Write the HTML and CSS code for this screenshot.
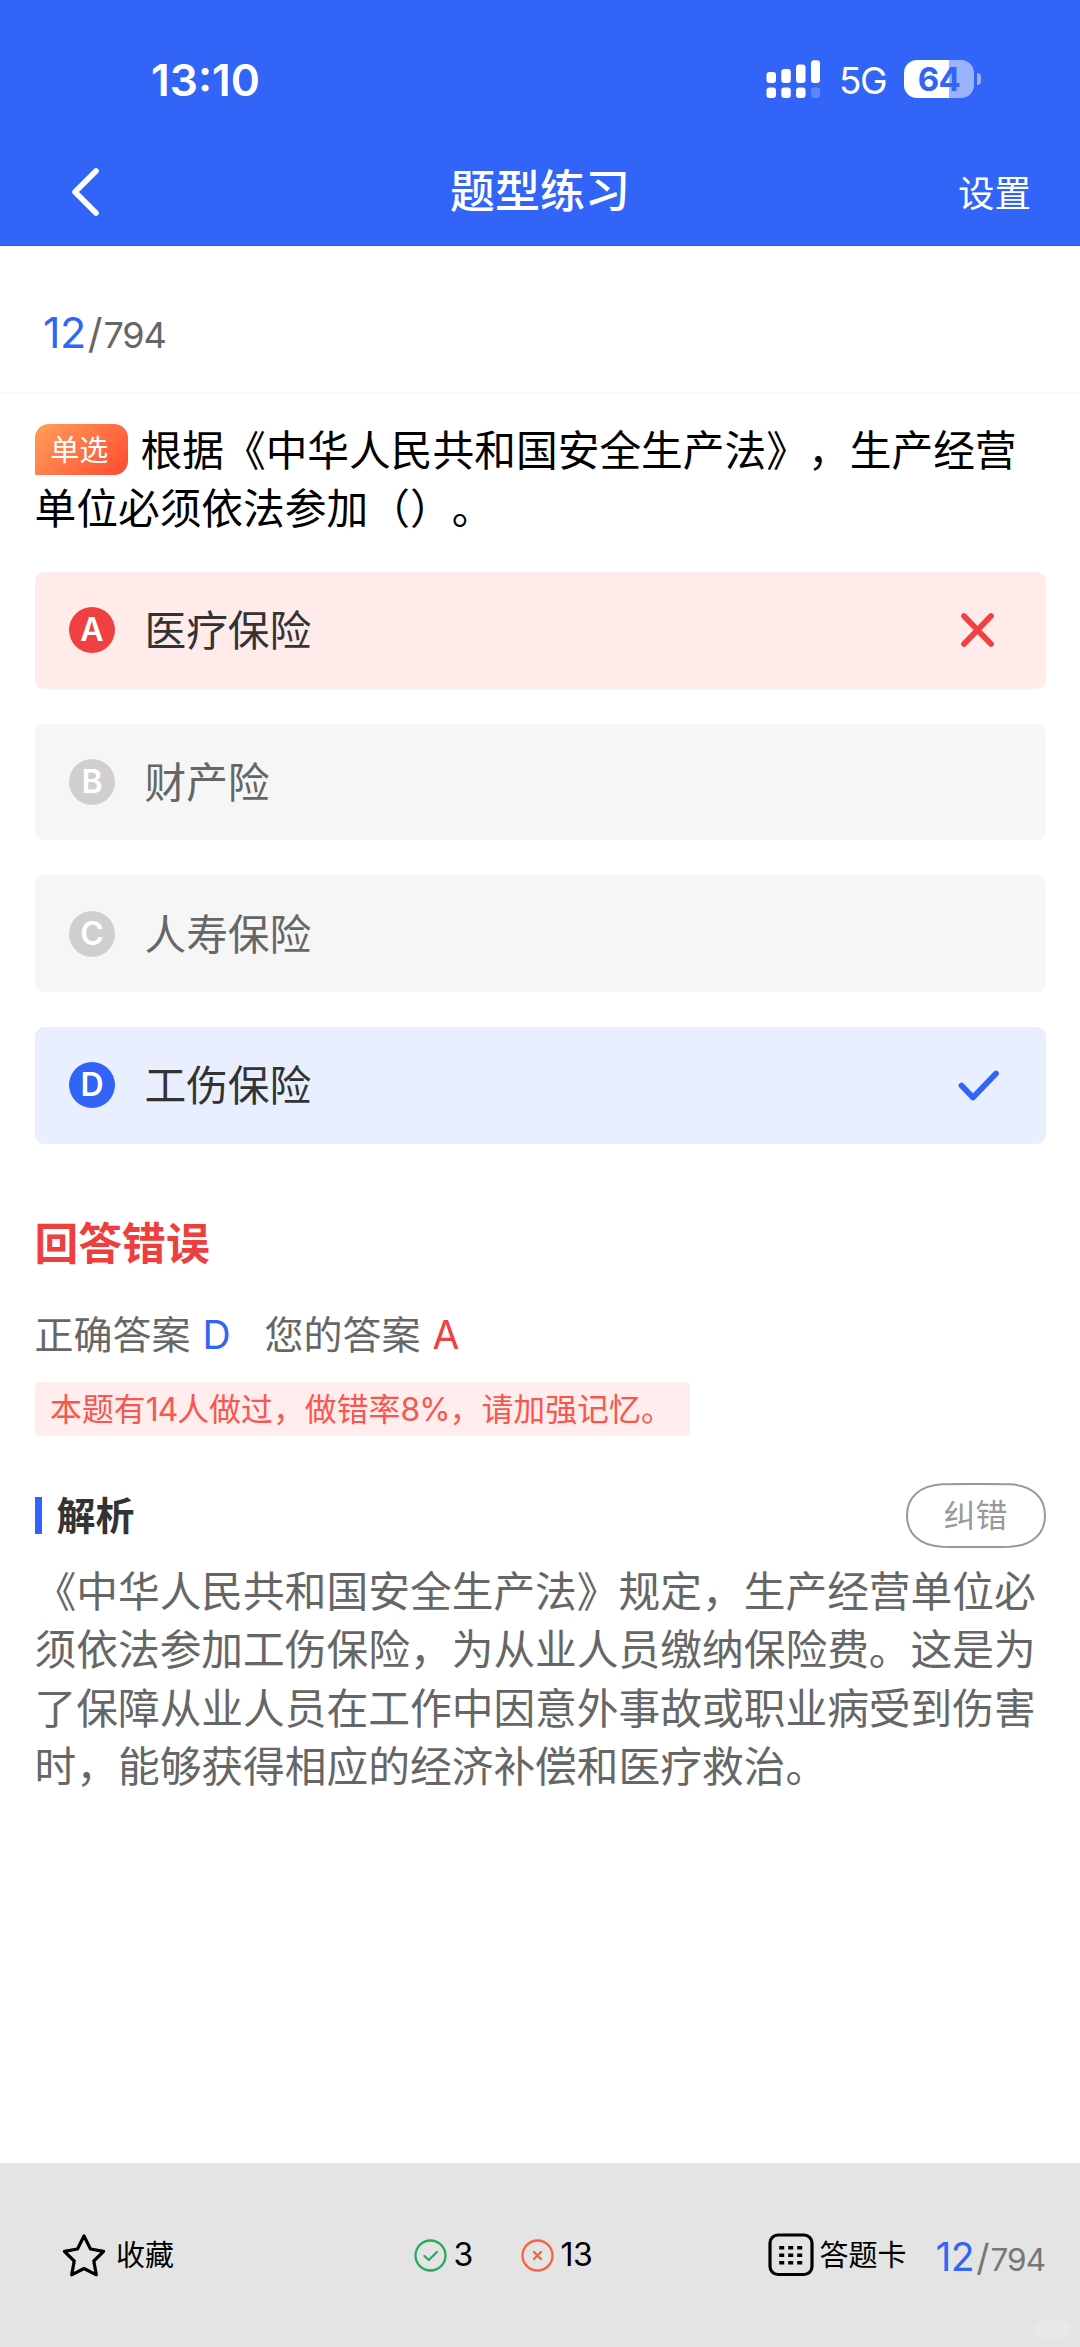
FILE: index.html
```html
<!DOCTYPE html>
<html lang="zh-CN">
<head>
<meta charset="utf-8">
<title>题型练习</title>
<link rel="stylesheet" href="styles.css">
</head>
<body>
<div class="app">
  <header class="header">
    <div class="status">
      <span class="time">13:10</span>
      <div class="status-right">
        <svg class="signal" width="55" height="38" viewBox="0 0 55 38" fill="#fff">
          <rect x="0.5" y="12" width="9.5" height="11" rx="3"/>
          <rect x="15.3" y="9" width="9.5" height="14" rx="3"/>
          <rect x="30" y="4.500" width="9.500" height="18.500" rx="3"/>
          <rect x="45" y="0.300" width="9" height="22.700" rx="3"/>
          <rect x="0.5" y="27.500" width="9.500" height="10.500" rx="3"/>
          <rect x="15.300" y="27.500" width="9.500" height="10.500" rx="3"/>
          <rect x="30" y="27.500" width="9.500" height="10.500" rx="3"/>
          <rect x="45" y="27.500" width="9" height="10.500" rx="3" opacity=".22"/>
        </svg>
        <span class="network">5G</span>
        <div class="battery"><span class="level">64</span></div>
        <span class="nub"></span>
      </div>
    </div>
    <nav class="nav">
      <svg class="back" width="30" height="50" viewBox="0 0 30 50" fill="none" stroke="#fff" stroke-width="5.600" stroke-linecap="round" stroke-linejoin="round"><path d="M26 4 L5 25 L26 46"/></svg>
      <h1 class="title">题型练习</h1>
      <span class="settings">设置</span>
    </nav>
  </header>

  <div class="progress"><span class="current">12</span><span class="slash">/</span><span class="total">794</span></div>

  <main class="content">
    <div class="question"><span class="tag">单选</span><span>根据《中华人民共和国安全生产法》，生产经营</span><br><span>单位必须依法参加（）。</span></div>

    <ul class="options">
      <li class="option wrong"><span class="letter">A</span><span class="label">医疗保险</span>
        <svg class="mark" width="42" height="42" viewBox="0 0 42 42" fill="none" stroke="#f04142" stroke-width="5.800" stroke-linecap="round"><path d="M6 7 L33 35 M33 7 L6 35"/></svg>
      </li>
      <li class="option"><span class="letter">B</span><span class="label">财产险</span></li>
      <li class="option"><span class="letter">C</span><span class="label">人寿保险</span></li>
      <li class="option right"><span class="letter">D</span><span class="label">工伤保险</span>
        <svg class="mark" width="42" height="42" viewBox="0 0 42 42" fill="none" stroke="#3264f8" stroke-width="5.800" stroke-linecap="round" stroke-linejoin="round"><path d="M3.500 21.500 L15 33.500 L38 9.500"/></svg>
      </li>
    </ul>

    <h2 class="result">回答错误</h2>
    <div class="answers">
      <span>正确答案</span><span class="correct">D</span><span class="yours">您的答案</span><span class="mine">A</span>
    </div>
    <p class="notice">本题有<span class="num">14</span>人做过，做错率<span class="num">8%</span>，请加强记忆。</p>

    <div class="analysis-head">
      <h3 class="analysis-title">解析</h3>
      <button class="report" type="button">
        <svg class="report-outline" width="140" height="65" viewBox="0 0 140 65" fill="none" stroke="#999" stroke-width="2"><path d="M36 1.300 C52 0.900 88 0.900 104 1.300 C127 2.500 139 15 139 32.500 C139 50 127 62.500 104 63.700 C88 64.100 52 64.100 36 63.700 C13 62.500 1 50 1 32.500 C1 15 13 2.500 36 1.300 Z"/></svg>
        <span>纠错</span>
      </button>
    </div>
    <p class="analysis">《中华人民共和国安全生产法》规定，生产经营单位必须依法参加工伤保险，为从业人员缴纳保险费。这是为了保障从业人员在工作中因意外事故或职业病受到伤害时，能够获得相应的经济补偿和医疗救治。</p>
  </main>

  <footer class="footer">
    <div class="favorite">
      <svg width="44" height="44" viewBox="0 0 44 44" fill="none" stroke="#000" stroke-width="3.200" stroke-linejoin="round"><path d="M22 3 L28.500 16 L41.600 18.300 L31.800 28 L34.300 41.800 L22 35.500 L9.700 41.800 L12.200 28 L2.400 18.300 L15.500 16 Z"/></svg>
      <span>收藏</span>
    </div>
    <div class="score">
      <svg width="33" height="33" viewBox="0 0 33 33" fill="none" stroke="#28ab5e" stroke-width="2.300" stroke-linecap="round" stroke-linejoin="round"><circle cx="16.500" cy="16.500" r="15"/><path d="M10.500 17 L14.800 21 L23 13"/></svg>
      <span>3</span>
    </div>
    <div class="score miss">
      <svg width="33" height="33" viewBox="0 0 33 33" fill="none" stroke="#f9623d" stroke-width="2.300" stroke-linecap="round"><circle cx="16.500" cy="16.500" r="15"/><path d="M13 13 L20 20 M20 13 L13 20"/></svg>
      <span>13</span>
    </div>
    <div class="sheet">
      <svg width="46" height="44" viewBox="0 0 46 44"><rect x="2" y="2" width="42" height="39.500" rx="8" fill="none" stroke="#000" stroke-width="3.200"/><path fill="#000" d="M11.200 13h5v3.600h-5zM20.200 13h5v3.600h-5zM29.200 13h5v3.600h-5zM11.200 20.500h5v3.600h-5zM20.200 20.500h5v3.600h-5zM29.200 20.500h5v3.600h-5zM11.200 28h5v3.600h-5zM20.200 28h5v3.600h-5zM29.200 28h5v3.600h-5z"/></svg>
      <span>答题卡</span>
    </div>
    <div class="progress small"><span class="current">12</span><span class="slash">/</span><span class="total">794</span></div>
    <span class="handle"></span>
  </footer>
</div>
</body>
</html>
```
FILE: styles.css
```css
* { box-sizing: border-box; margin: 0; padding: 0; }
body { background: #fff; font-family: Inter, "Noto Sans CJK SC", sans-serif; color: #000; text-spacing-trim: space-all; }
svg { display: block; flex: none; }
.app { width: 1080px; height: 2347px; display: flex; flex-direction: column; overflow: hidden; }

.header { height: 246px; background: #3264f8; color: #fff; border-bottom: 1px solid #2b59ec; flex: none; padding-top: 48px; }
.status { height: 62px; padding: 0 99px 0 151px; display: flex; justify-content: space-between; align-items: center; }
.time { font-size: 44.300px; font-weight: 600; line-height: 62px; padding-top: 2px; }
.status-right { display: flex; align-items: center; }
.network { font-size: 37px; line-height: 62px; margin-left: 18px; width: 65px; padding-top: 4px; letter-spacing: -1.500px; }
.battery { width: 70px; height: 38px; border-radius: 13px; background: linear-gradient(90deg, #fff 64%, #9ab2fc 64%); display: flex; justify-content: center; align-items: center; }
.level { font-size: 33px; line-height: 38px; font-weight: 700; color: #3264f8; letter-spacing: -0.500px; }
.nub { width: 4px; height: 12px; margin-left: 3px; border-radius: 0 4px 4px 0; background: #9ab2fc; }
.nav { height: 88px; margin-top: 38px; display: grid; grid-template-columns: 380px 182px 1fr; align-items: center; padding: 0 49px 0 70px; }
.title { font-size: 45px; font-weight: 500; line-height: 60px; white-space: nowrap; }
.settings { font-size: 36.500px; line-height: 50px; text-align: right; padding-top: 3px; }

.progress { height: 148px; flex: none; border-bottom: 2px solid #f8f8f8; padding: 56px 0 0 43px; display: flex; align-items: baseline; line-height: 60px; color: #666; }
.current { font-size: 43px; color: #3264f8; letter-spacing: -0.500px; }
.slash { font-size: 41px; margin-left: 2px; }
.total { font-size: 36px; letter-spacing: -1.200px; margin-left: 1px; }

.content { flex: 1; padding: 28px 34.500px 0; }
.question { font-size: 41.730px; line-height: 58.300px; white-space: nowrap; }
.tag { display: inline-flex; align-items: center; justify-content: center; vertical-align: top; width: 93.500px; height: 51px; margin: 2px 12.500px 0 0; padding: 2px 4px 0 0; border-radius: 14px 14px 14px 0; background: linear-gradient(135deg, #ff9f5a, #ff4a31); color: #fff; font-size: 29px; line-height: 44px; }

.options { list-style: none; margin-top: 33.500px; display: flex; flex-direction: column; gap: 35.200px; }
.option { height: 116.500px; border-radius: 9px; background: #f6f6f6; color: #666; display: flex; align-items: center; padding: 0 46px 0 34.500px; font-size: 41.700px; line-height: 58px; }
.letter { width: 46px; height: 46px; border-radius: 50%; background: #d0cece; color: #fff; font-size: 32px; font-weight: 600; line-height: 46px; text-align: center; }
.label { margin-left: 29.500px; flex: 1; padding-top: 2px; }
.wrong { background: #feebea; color: #333; }
.wrong .letter { background: #f04142; }
.right { background: #e9efff; color: #333; }
.right .letter { background: #3264f8; }

.result { font-size: 43.800px; font-weight: 700; line-height: 60px; color: #ee3f3f; margin-top: 71px; }
.answers { display: flex; font-size: 39px; line-height: 54px; color: #666; margin-top: 33px; }
.correct { color: #3264f8; width: 59px; padding-left: 12px; margin-right: 15px; }
.mine { color: #f04142; padding-left: 12px; }
.notice { width: 655.500px; height: 54px; margin-top: 20.500px; padding: 1px 0 0 15.500px; border-radius: 5px; background: #ffecec; color: #f8574f; font-size: 31.900px; line-height: 54px; white-space: nowrap; }
.num { letter-spacing: -1px; }
.analysis-head { display: flex; justify-content: space-between; align-items: center; height: 65px; margin-top: 47px; }
.analysis-title { font-size: 39px; line-height: 37px; font-weight: 700; color: #333; border-left: 7.500px solid #3264f8; padding-left: 15px; }
.report { display: grid; place-items: center; width: 140px; height: 65px; border: 0; background: none; font-family: inherit; font-size: 32px; line-height: 44px; color: #999; }
.report > * { grid-area: 1 / 1; }
.analysis { font-size: 41.730px; line-height: 58.300px; color: #666; margin-top: 15px; margin-right: -6px; }

.footer { position: relative; height: 184px; flex: none; background: #e4e4e4; display: flex; align-items: center; font-size: 29px; line-height: 44px; }
.footer > div { display: flex; align-items: center; }
.favorite { width: 351.500px; margin-left: 62px; gap: 10px; }
.favorite span, .sheet span { padding-top: 2px; }
.score { width: 107px; gap: 7px; font-size: 32px; letter-spacing: -0.500px; }
.miss { width: 247px; }
.sheet { width: 168px; gap: 6px; }
.footer .progress { height: 60px; padding: 2px 0 0; border: 0; align-items: baseline; color: #777; }
.small .current { font-size: 39px; }
.small .slash { font-size: 37px; }
.small .total { font-size: 31.500px; letter-spacing: -0.900px; }
.handle { position: absolute; right: 9px; bottom: 9px; width: 37px; height: 18px; border-radius: 9px; background: #e8e8e8; }
```
